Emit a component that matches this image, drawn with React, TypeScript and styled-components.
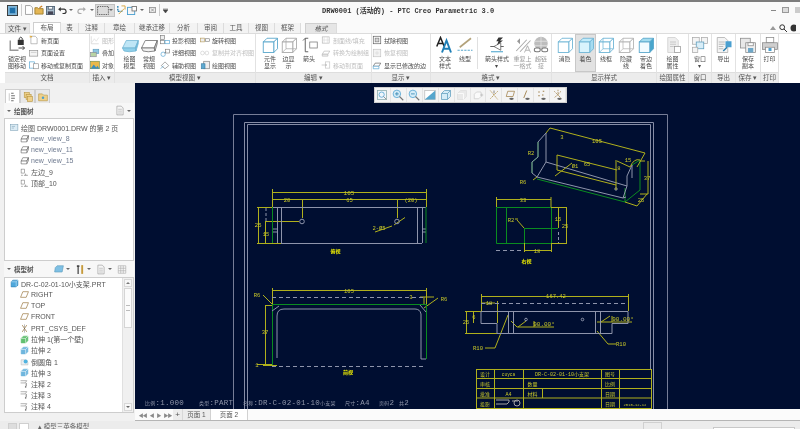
import React from 'react';
import styled, { createGlobalStyle } from 'styled-components';

const Global = createGlobalStyle`
  html, body { margin: 0; padding: 0; background: #f0f0f0; overflow: hidden; }
  * { box-sizing: border-box; }
`;

const SANS = `"Liberation Sans", "Noto Sans CJK SC", sans-serif`;
const MONO = `"Liberation Mono", "Noto Sans CJK SC", monospace`;

const Root = styled.div`
  width: 800px; height: 429px; overflow: hidden; display: flex; flex-direction: column;
  font-family: ${SANS}; color: #444; background: #f0f0f0; filter: blur(0.4px);
`;
const TitleBar = styled.div`
  height: 22px; flex: none; display: flex; align-items: center; background: #fafafa;
  border-top: 2px solid #7d7d7d; padding-bottom: 4px;
`;
const Quick = styled.div`
  width: 172px; flex: none; display: flex; align-items: center; padding-left: 6px; height: 100%;
`;
const QuickSlot = styled.span<{ $w: number; $on?: boolean }>`
  width: ${p => p.$w}px; height: 13px; display: flex; align-items: center; justify-content: center; flex: none;
  background: ${p => (p.$on ? '#dcdcdc' : 'transparent')};
  border: ${p => (p.$on ? '1px solid #c0c0c0' : 'none')};
`;
const Caret = styled.span`
  width: 0; height: 0; border-left: 2px solid transparent; border-right: 2px solid transparent;
  border-top: 2.5px solid #666; display: inline-block; flex: none;
`;
const Title = styled.div`
  flex: 1; font: 7px ${MONO}; color: #333; font-weight: 700; padding-left: 150px; white-space: nowrap;
`;
const WinCtrls = styled.div`
  width: 30px; flex: none; display: flex; align-items: center; gap: 6px; padding-left: 1px;
`;
const TabRow = styled.div`
  height: 11px; flex: none; display: flex; align-items: flex-end; padding-left: 5px; background: #fafafa; position: relative; gap: 0;
`;
const Tab = styled.div<{ $w: number; $active?: boolean; $file?: boolean; $ctx?: boolean }>`
  width: ${p => p.$w}px; height: ${p => (p.$active ? 11 : 10)}px; flex: none; text-align: center;
  font-size: 6.5px; line-height: 10px; white-space: nowrap; color: #555;
  font-style: ${p => (p.$ctx ? 'italic' : 'normal')};
  background: ${p => (p.$active ? '#fff' : p.$file || p.$ctx ? '#e6e6e6' : '#f3f3f3')};
  border: ${p => (p.$active || p.$ctx || p.$file ? '1px solid #cfcfcf' : 'none')};
  border-right: 1px solid #dcdcdc;
  border-bottom: none;
`;
const TabGap = styled.div<{ $w: number }>`
  width: ${p => p.$w}px; flex: none; height: 1px;
`;
const TabEnd = styled.div`
  margin-left: auto; width: 30px; height: 11px; display: flex; align-items: center; gap: 3px;
`;
const Ribbon = styled.div`
  height: 50px; flex: none; display: flex; padding-left: 5px; background: #fff; border-top: 1px solid #dcdcdc;
`;
const Group = styled.div<{ $w: number }>`
  width: ${p => p.$w}px; flex: none; display: flex; flex-direction: column; border-right: 1px solid #e2e2e2;
`;
const GroupBody = styled.div`
  height: 38px; display: flex; flex: none;
`;
const GroupLabel = styled.div`
  height: 12px; flex: none; background: #ececec; border-top: 1px solid #dedede; border-bottom: 1px solid #d5d5d5;
  font-size: 6.5px; line-height: 10px; text-align: center; color: #555; white-space: nowrap;
`;
const Big = styled.div<{ $w: number; $active?: boolean; $off?: boolean }>`
  width: ${p => p.$w}px; flex: none; display: flex; flex-direction: column; align-items: center; padding-top: 2px;
  font-size: 6px; line-height: 7px; text-align: center; color: ${p => (p.$off ? '#9a9a9a' : '#4a4a4a')};
  background: ${p => (p.$active ? '#e2e2e2' : 'transparent')};
  box-shadow: ${p => (p.$active ? 'inset 0 0 0 1px #c8c8c8' : 'none')};
  svg { width: 18px; height: 18px; margin-bottom: 2px; flex: none; }
  span { display: block; white-space: pre; }
`;
const SmallCol = styled.div<{ $w: number }>`
  width: ${p => p.$w}px; flex: none; display: flex; flex-direction: column;
`;
const SmallRow = styled.div<{ $off?: boolean }>`
  height: 12.5px; display: flex; align-items: center; gap: 2px; font-size: 6px; white-space: nowrap;
  color: ${p => (p.$off ? '#a8a8a8' : '#4a4a4a')};
  opacity: ${p => (p.$off ? 0.75 : 1)};
  svg { width: 10px; height: 10px; flex: none; }
`;
const VSep = styled.div`
  width: 1px; flex: none; margin: 3px 2px; background: #e0e0e0;
`;
const Body = styled.div`
  height: 338px; flex: none; display: flex;
`;
const Side = styled.div`
  width: 135px; flex: none; background: #f1f1f1; padding: 6px 1px 0 4px; display: flex; flex-direction: column;
`;
const PanelTabs = styled.div`
  height: 14px; flex: none; display: flex; padding-left: 1px;
`;
const PanelTab = styled.div<{ $active?: boolean }>`
  width: 15px; height: 14px; display: flex; align-items: center; justify-content: center; flex: none;
  background: ${p => (p.$active ? '#fff' : '#e8e8e8')}; border: 1px solid #cfcfcf; border-bottom: none;
  svg { width: 10px; height: 10px; }
`;
const PanelHead = styled.div<{ $h: number }>`
  height: ${p => p.$h}px; flex: none; display: flex; align-items: center; padding: 0 3px; font-size: 6.5px; font-weight: 700; color: #555;
  gap: 3px; background: #f7f7f7; white-space: nowrap;
`;
const Spacer = styled.div<{ $w?: number }>`
  width: ${p => (p.$w ? `${p.$w}px` : 'auto')}; flex: ${p => (p.$w ? 'none' : 1)};
`;
const HeadIcon = styled.span`
  display: flex; align-items: center; gap: 2px; margin-left: 2px; flex: none;
  svg { width: 10px; height: 11px; }
`;
const TreeBox = styled.div<{ $h: number }>`
  height: ${p => p.$h}px; flex: none; background: #fff; border: 1px solid #cdcdcd; display: flex;
`;
const TreeList = styled.div<{ $top: number }>`
  flex: 1; padding-top: ${p => p.$top}px; min-width: 0;
`;
const TreeRow = styled.div<{ $indent: number; $dim?: boolean }>`
  height: 11.15px; display: flex; align-items: center; gap: 2px; padding-left: ${p => p.$indent}px;
  font-size: 7px; white-space: nowrap; color: ${p => (p.$dim ? '#6f7b90' : '#555')};
  svg { width: 9px; height: 9px; flex: none; }
`;
const Scroll = styled.div`
  width: 11px; flex: none; display: flex; flex-direction: column; background: #f0f0f0; border-left: 1px solid #e0e0e0; padding: 1px;
`;
const ScrollBtn = styled.div`
  height: 8px; flex: none; display: flex; align-items: center; justify-content: center; background: #f7f7f7; border: 1px solid #d8d8d8;
`;
const UpCaret = styled(Caret)`
  border-top: none; border-bottom: 2.5px solid #777;
`;
const ScrollThumb = styled.div`
  height: 40px; flex: none; background: #fbfbfb; border: 1px solid #d5d5d5; margin: 1px 0; display: flex; align-items: center; justify-content: center;
  &::after { content: ''; width: 4px; height: 4px; border-top: 1px solid #bbb; border-bottom: 1px solid #bbb; }
`;
const ScrollTrack = styled.div`
  flex: 1;
`;
const Work = styled.div`
  flex: 1; min-width: 0; display: flex; flex-direction: column;
`;
const Canvas = styled.div`
  height: 326px; flex: none; background: #000e31; position: relative; overflow: hidden;
`;
const Sheet = styled.svg`
  display: block; width: 665px; height: 326px;
`;
const FloatBar = styled.div`
  position: absolute; left: 239px; top: 4px; width: 193px; height: 16px; display: flex;
  background: #f4f4f4; border: 1px solid #d0d0d0;
`;
const FloatCell = styled.div`
  flex: 1; display: flex; align-items: center; justify-content: center; border-right: 1px solid #e4e4e4;
  svg { width: 12px; height: 12px; }
`;
const PageStrip = styled.div`
  height: 12px; flex: none; background: #fbfbfb; display: flex; align-items: stretch; padding-left: 2px;
  border-bottom: 1px solid #b5b5b5;
`;
const NavBtns = styled.div`
  width: 36px; flex: none; display: flex; align-items: center; justify-content: space-around; font-size: 5px; color: #8a8a8a; letter-spacing: -1px;
`;
const PageAdd = styled.div`
  width: 10px; flex: none; text-align: center; font-size: 8px; line-height: 11px; color: #555; background: #ececec; border-right: 1px solid #d8d8d8;
`;
const PageTab = styled.div<{ $w: number; $active?: boolean }>`
  width: ${p => p.$w}px; flex: none; text-align: center; font-size: 6.5px; line-height: 11px; color: #555;
  background: ${p => (p.$active ? '#fff' : '#ececec')}; border-right: 1px solid #d2d2d2;
`;
const Status = styled.div`
  height: 8px; flex: none; display: flex; align-items: flex-start; background: #ececec; overflow: hidden; font-size: 6.5px; color: #666; padding-left: 8px;
`;
const StatusBtn = styled.div<{ $w: number; $white?: boolean }>`
  width: ${p => p.$w}px; height: 8px; margin: 2px 2px 0 0; flex: none; background: ${p => (p.$white ? '#fff' : '#ddd')}; border: 1px solid #cfcfcf;
`;
const StatusText = styled.div`
  width: 612px; flex: none; padding: 1px 0 0 7px; line-height: 10px; white-space: nowrap;
`;
const StatusSlot = styled.div<{ $w: number; $white?: boolean }>`
  width: ${p => p.$w}px; height: 8px; margin-top: ${p => (p.$white ? 6 : 1)}px; flex: none;
  background: ${p => (p.$white ? '#fff' : 'transparent')};
  border: 1px solid ${p => (p.$white ? '#c8c8c8' : '#d0d0d0')};
  border-bottom: none;
`;

/* ---------- drawing text ---------- */
const Dim = styled.text<{ $s?: number }>`
  font: ${p => p.$s ?? 5.5}px ${MONO}; fill: #c9c92a; text-anchor: middle;
`;
const Mark = styled.text`
  font: 700 5px "Noto Sans CJK SC", sans-serif; fill: #f0f000; text-anchor: middle;
`;
const SheetInfo = styled.text`
  font: 7.5px ${MONO}; fill: #8f96aa; letter-spacing: 0.25px;
`;
const Cjk = styled.tspan`
  font-size: 5px;
`;

/* ---------- icons ---------- */
const Cube = ({ s = '#7fb6d0', f = '#fff', t = '#fff', r = '#fff', wire = false }: { s?: string; f?: string; t?: string; r?: string; wire?: boolean }) => (
  <svg viewBox="0 0 24 24">
    <path d="M3 8 L8 3 H22 L17 8 Z" fill={t} stroke={s} strokeWidth="1.2" />
    <path d="M17 8 L22 3 V17 L17 22 Z" fill={r} stroke={s} strokeWidth="1.2" />
    <rect x="3" y="8" width="14" height="14" fill={f} stroke={s} strokeWidth="1.2" />
    {wire && <path d="M8 3 V17 H22 M8 17 L3 22" fill="none" stroke={s} strokeWidth="1" />}
  </svg>
);
const Slab = ({ blue }: { blue?: boolean }) => (
  <svg viewBox="0 0 24 24">
    <path d="M2 16 L7 6 H23 L19 16 Z" fill={blue ? '#bfe6f6' : '#fff'} stroke={blue ? '#6fb3d2' : '#666'} strokeWidth="1" />
    <path d="M2 16 H19 L20 20 Q10 22 4 20 Z" fill={blue ? '#8fd0ea' : '#f2f2f2'} stroke={blue ? '#6fb3d2' : '#666'} strokeWidth="1" />
    <path d="M19 16 L23 6 L23 10 L20 20 Z" fill={blue ? '#6fbde0' : '#ddd'} stroke={blue ? '#6fb3d2' : '#666'} strokeWidth="1" />
  </svg>
);
const LockMove = () => (
  <svg viewBox="0 0 24 24">
    <path d="M3 6 V19 H14" fill="none" stroke="#999" strokeWidth="2" />
    <rect x="13" y="5" width="8" height="7" fill="#333" />
    <path d="M15 5 V3 Q17 0 19 3 V5" fill="none" stroke="#333" strokeWidth="1.2" />
    <path d="M14 16 H22 M19.5 13.5 L22 16 L19.5 18.5" fill="none" stroke="#333" strokeWidth="1.2" />
  </svg>
);
const Arrows = () => (
  <svg viewBox="0 0 24 24">
    <path d="M7 3 V21 M7 3 L4 6 M7 3 H11 M7 21 H11" fill="none" stroke="#555" strokeWidth="1.2" />
    <rect x="13" y="8" width="10" height="8" fill="#fff" stroke="#777" />
  </svg>
);
const TextStyle = () => (
  <svg viewBox="0 0 24 24">
    <path d="M1 14 L6 2 L11 14 M3 10 H9" fill="none" stroke="#222" strokeWidth="2" />
    <path d="M8 22 L14 6 L20 22 M10.5 17 H17.5" fill="none" stroke="#1f7fb6" strokeWidth="2.6" />
  </svg>
);
const LineStyle = () => (
  <svg viewBox="0 0 24 24">
    <path d="M5 15 L20 3" stroke="#b3a27a" strokeWidth="2.2" />
    <path d="M2 19 H22" stroke="#58a7cc" strokeWidth="1.6" strokeDasharray="3 1.5" />
  </svg>
);
const ArrowStyle = () => (
  <svg viewBox="0 0 24 24">
    <path d="M3 14 H21" stroke="#555" strokeWidth="1.2" />
    <path d="M8 14 L17 9 V19 Z" fill="#fff" stroke="#555" />
    <path d="M14 2 H20 L16 6 H20 L12 12 L14 7 H11 Z" fill="#333" />
    <path d="M4 21 H20" stroke="#4aa3cd" strokeWidth="1.4" />
  </svg>
);
const Repeat = () => (
  <svg viewBox="0 0 24 24">
    <path d="M3 20 L17 5 M8 21 L22 6" stroke="#aaa" strokeWidth="1.4" />
    <path d="M4 7 L8 3 V11 Z" fill="#999" />
    <path d="M14 22 L18 13 L22 22 M16 19 H20" fill="none" stroke="#999" />
  </svg>
);
const Link = () => (
  <svg viewBox="0 0 24 24">
    <circle cx="12" cy="10" r="9" fill="#bdbdbd" />
    <path d="M4 7 H20 M4 13 H20 M12 1 V19" stroke="#e6e6e6" />
    <rect x="3" y="16" width="8" height="5" rx="2.5" fill="#fff" stroke="#777" strokeWidth="1.4" />
    <rect x="13" y="16" width="8" height="5" rx="2.5" fill="#fff" stroke="#777" strokeWidth="1.4" />
  </svg>
);
const Props = () => (
  <svg viewBox="0 0 24 24">
    <path d="M5 2 H15 L19 6 V22 H5 Z" fill="#eee" stroke="#ccc" />
    <path d="M8 8 H16 M8 11 H16 M8 14 H13" stroke="#bbb" />
    <rect x="14" y="14" width="8" height="8" fill="#fff" stroke="#999" />
  </svg>
);
const WindowIcon = () => (
  <svg viewBox="0 0 24 24">
    <rect x="2" y="2" width="9" height="9" fill="#f4f4f4" stroke="#aaa" />
    <rect x="14" y="2" width="8" height="8" fill="#f4f4f4" stroke="#aaa" />
    <rect x="7" y="8" width="10" height="9" fill="#d9eef8" stroke="#5d9dbd" />
    <rect x="2" y="15" width="7" height="7" fill="#f4f4f4" stroke="#aaa" />
  </svg>
);
const ExportIcon = () => (
  <svg viewBox="0 0 24 24">
    <path d="M3 2 H13 L17 6 V22 H3 Z" fill="#f4f4f4" stroke="#aaa" />
    <path d="M5 8 H13 M5 11 H13 M5 14 H11 M5 17 H11" stroke="#aaa" />
    <rect x="14" y="7" width="8" height="8" fill="#4a9fd0" />
    <path d="M11 20 L16 15" stroke="#2a7fae" strokeWidth="2" />
  </svg>
);
const SaveCopy = () => (
  <svg viewBox="0 0 24 24">
    <rect x="2" y="3" width="13" height="13" fill="#e8e8e8" stroke="#888" />
    <rect x="9" y="9" width="13" height="13" fill="#efefef" stroke="#888" />
    <rect x="12" y="9" width="7" height="4" fill="#fff" stroke="#888" />
    <rect x="12" y="16" width="7" height="6" fill="#6ea7c8" />
  </svg>
);
const PrintIcon = () => (
  <svg viewBox="0 0 24 24">
    <rect x="7" y="2" width="10" height="7" fill="#fff" stroke="#888" />
    <rect x="2" y="9" width="20" height="9" fill="#cfcfcf" stroke="#888" />
    <rect x="6" y="15" width="12" height="7" fill="#fff" stroke="#888" />
    <rect x="10" y="16" width="4" height="4" fill="#4a9fd0" />
  </svg>
);

type Sm = 'page' | 'setup' | 'move' | 'graph' | 'overlay' | 'pic' | 'proj' | 'detail' | 'aux' | 'rot' | 'copy' | 'view' | 'hatch' | 'conv' | 'mv2' | 'erase' | 'rest' | 'edge';
const small: Record<Sm, React.ReactNode> = {
  page: <><path d="M3 2 H10 L13 5 V14 H3 Z" fill="#fff" stroke="#999" /><path d="M2 1 L4 3 M1 3 H5" stroke="#e2a21a" strokeWidth="1.4" /></>,
  setup: <><rect x="1" y="4" width="13" height="9" fill="#f4f4f4" stroke="#888" /><path d="M3 7 H12" stroke="#bbb" /></>,
  move: <><rect x="1" y="3" width="8" height="10" fill="#fff" stroke="#4a9fd0" /><rect x="7" y="6" width="8" height="8" fill="#fff" stroke="#888" /></>,
  graph: <><path d="M2 2 V14 H14" fill="none" stroke="#bbb" /><path d="M3 12 L7 6 L10 10 L14 4" fill="none" stroke="#ccc" /></>,
  overlay: <><rect x="5" y="2" width="9" height="7" fill="#8fc6e2" stroke="#5d9dbd" /><rect x="1" y="7" width="9" height="7" fill="#b9d4a4" stroke="#889" /></>,
  pic: <><rect x="1" y="2" width="14" height="12" fill="#e9b94a" stroke="#6b8f4d" /><path d="M1 14 L6 7 L10 12 L12 9 L15 14 Z" fill="#3b8fbd" /></>,
  proj: <><rect x="1" y="1" width="6" height="6" fill="#eee" stroke="#777" /><rect x="1" y="9" width="6" height="5" fill="#fff" stroke="#777" /><rect x="8" y="9" width="7" height="5" fill="#fff" stroke="#4a9fd0" /></>,
  detail: <><circle cx="5" cy="10" r="3.5" fill="#fff" stroke="#4a9fd0" /><rect x="9" y="2" width="6" height="6" fill="#fff" stroke="#777" /><path d="M7 8 L10 6" stroke="#777" /></>,
  aux: <><path d="M2 9 L8 3 L14 9 L8 14 Z" fill="#fff" stroke="#777" /><path d="M1 14 L6 9" stroke="#4a9fd0" /></>,
  rot: <><rect x="1" y="5" width="6" height="6" fill="#eee" stroke="#b59a5a" /><rect x="9" y="6" width="6" height="4" fill="#fff" stroke="#777" /></>,
  copy: <><circle cx="4" cy="8" r="3" fill="none" stroke="#bbb" /><circle cx="11" cy="8" r="3" fill="none" stroke="#bbb" /><path d="M6 8 H9" stroke="#ccc" /></>,
  view: <><rect x="6" y="2" width="9" height="12" fill="#eee" stroke="#777" /><rect x="2" y="6" width="6" height="8" fill="#5da8d0" stroke="#3c7fa3" /></>,
  hatch: <><rect x="2" y="3" width="11" height="10" fill="none" stroke="#999" /><path d="M2 8 H13 M5 3 V13 M10 3 V13" stroke="#ccc" /></>,
  conv: <><path d="M2 10 L5 5 H14 L11 10 Z" fill="#fff" stroke="#999" /><path d="M2 10 H11 V13 H2 Z" fill="#eee" stroke="#999" /></>,
  mv2: <><rect x="7" y="3" width="7" height="10" fill="#fff" stroke="#aaa" /><path d="M1 8 H9 M7 6 L9 8 L7 10" fill="none" stroke="#999" /></>,
  erase: <><rect x="2" y="2" width="12" height="12" fill="#fff" stroke="#555" /><rect x="5" y="5" width="6" height="6" fill="#d4d4d4" stroke="#777" /></>,
  rest: <><rect x="2" y="2" width="12" height="12" fill="#eee" stroke="#aaa" /><path d="M5 8 H11 M8 5 V11" stroke="#ccc" /></>,
  edge: <><path d="M2 10 L5 5 H14 L11 10 Z" fill="#fff" stroke="#555" /><path d="M2 10 H11 V14 H2 Z" fill="#fff" stroke="#4a9fd0" /></>,
};
const S = ({ n }: { n: Sm }) => <svg viewBox="0 0 16 16">{small[n]}</svg>;

const ViewIcon = () => (
  <svg viewBox="0 0 16 16"><path d="M2 9 L5 3 H15 L12 9 Z" fill="#fff" stroke="#555" /><path d="M2 9 H12 V14 H2 Z" fill="#fff" stroke="#555" /><path d="M12 9 L15 3 V8 L12 14" fill="#ddd" stroke="#555" /></svg>
);
const NoteIcon = () => (
  <svg viewBox="0 0 16 16"><rect x="2" y="2" width="6" height="7" fill="#fff" stroke="#777" /><path d="M2 13 H5 M7 13 H14 M10 10 V13" stroke="#888" strokeWidth="1.3" /></svg>
);
const PlaneIcon = () => (
  <svg viewBox="0 0 16 16"><path d="M1 13 L5 3 H15 L11 13 Z" fill="none" stroke="#a0804a" strokeWidth="1.3" /></svg>
);
const CsysIcon = () => (
  <svg viewBox="0 0 16 16"><path d="M4 2 L12 14 M12 2 L4 14" stroke="#a0804a" strokeWidth="1.4" /><path d="M8 1 V15" stroke="#555" strokeDasharray="2 1" /></svg>
);
const Feat = ({ c }: { c: string }) => (
  <svg viewBox="0 0 16 16"><path d="M2 6 L6 2 H14 V10 L10 14 H2 Z" fill={c} stroke={c} /><path d="M2 6 H10 V14 M10 6 L14 2" fill="none" stroke="#fff" strokeWidth="1" /></svg>
);
const Round = () => (
  <svg viewBox="0 0 16 16"><path d="M2 5 H9 Q14 5 14 10 V14 H2 Z" fill="#e9eef2" stroke="#bbb" /><circle cx="10" cy="8" r="3.5" fill="#4fb3e0" /></svg>
);
const AnnIcon = () => (
  <svg viewBox="0 0 16 16"><path d="M1 3 H12 L9 7 H1" fill="#fff" stroke="#777" /><path d="M11 7 V13" stroke="#444" strokeWidth="1.2" /><circle cx="10" cy="14" r="1.3" fill="#444" /></svg>
);
const RootPart = () => (
  <svg viewBox="0 0 16 16"><path d="M2 5 L5 2 H14 V11 L11 14 H2 Z" fill="#4fa8dc" stroke="#2d7fb0" /><path d="M2 5 H11 V14 M11 5 L14 2" fill="none" stroke="#cdeafa" /></svg>
);
const SheetIcon = () => (
  <svg viewBox="0 0 16 16"><rect x="1" y="3" width="13" height="10" fill="#dcecf5" stroke="#7b9fb5" /><path d="M3 6 H9 M3 9 H7" stroke="#7b9fb5" /></svg>
);
const DocIcon = () => (
  <svg viewBox="0 0 16 16"><path d="M3 1 H10 L13 4 V15 H3 Z" fill="#f6f6f6" stroke="#999" /><path d="M5 6 H11 M5 9 H11 M5 12 H11" stroke="#aaa" /></svg>
);
const TreeTabIcon = () => (
  <svg viewBox="0 0 16 16"><path d="M5 2 H9 M5 6 H11 M5 10 H11 M5 14 H9" stroke="#666" strokeWidth="1.5" /><path d="M2 2 V14" stroke="#aaa" /></svg>
);
const FolderTabIcon = () => (
  <svg viewBox="0 0 16 16"><rect x="2" y="1" width="8" height="8" fill="#eed08a" stroke="#b99740" /><rect x="5" y="4" width="8" height="8" fill="#eed08a" stroke="#b99740" /><rect x="7" y="7" width="8" height="8" fill="#eed08a" stroke="#b99740" /></svg>
);
const FavTabIcon = () => (
  <svg viewBox="0 0 16 16"><path d="M1 3 H7 L9 5 H15 V14 H1 Z" fill="#eed08a" stroke="#b99740" /><circle cx="8" cy="9" r="2" fill="#4a9fd0" /></svg>
);

/* ---------- data ---------- */
const tabs = [
  { t: '布局', w: 28, active: true },
  { t: '表', w: 18 }, { t: '注释', w: 26 }, { t: '章绘', w: 30 }, { t: '继承迁移', w: 35 },
  { t: '分析', w: 28 }, { t: '审阅', w: 26 }, { t: '工具', w: 25 }, { t: '视图', w: 26 }, { t: '框架', w: 26 },
];

const floatIcons: React.ReactNode[] = [
  <><rect x="2" y="2" width="12" height="12" fill="#eef6fb" stroke="#8aa" /><circle cx="7.5" cy="7.5" r="3.5" fill="none" stroke="#4a9fd0" /><path d="M10 10 L14 14" stroke="#777" /></>,
  <><circle cx="6.5" cy="6.5" r="5" fill="#d5ecf7" stroke="#4a9fd0" /><path d="M4 6.5 H9 M6.5 4 V9" stroke="#2a7fae" /><path d="M10 10 L15 15" stroke="#777" strokeWidth="1.5" /></>,
  <><circle cx="6.5" cy="6.5" r="5" fill="#d5ecf7" stroke="#4a9fd0" /><path d="M4 6.5 H9" stroke="#2a7fae" /><path d="M10 10 L15 15" stroke="#777" strokeWidth="1.5" /></>,
  <><rect x="1" y="2" width="14" height="12" fill="#fff" stroke="#bbb" /><path d="M1 14 L15 2 V14 Z" fill="#55a5cc" /></>,
  <><path d="M2 6 L6 2 H14 V10 L10 14 H2 Z" fill="#d5ecf7" stroke="#5d9dbd" /><path d="M2 6 H10 V14 M10 6 L14 2" fill="none" stroke="#5d9dbd" /></>,
  <><path d="M2 6 L6 2 H14 V10 L10 14 H2 Z" fill="#e9e9e9" stroke="#ddd" /><path d="M2 6 H10 V14" fill="none" stroke="#fff" /></>,
  <><path d="M3 7 L6 4 H12 V10 L9 13 H3 Z" fill="#fafafa" stroke="#ccc" /><path d="M11 8 H15 M13 6 V10" stroke="#bbb" /></>,
  <><path d="M3 2 L13 14 M13 3 L3 13" stroke="#b59a5a" strokeWidth="1.2" strokeDasharray="2 1" /><path d="M8 2 V6" stroke="#666" /></>,
  <><path d="M3 10 L5 3 H14 L12 10 Z" fill="none" stroke="#a0804a" /><ellipse cx="10" cy="13" rx="3" ry="1.5" fill="#666" /></>,
  <><path d="M5 12 L9 2" stroke="#a0804a" strokeWidth="1.2" /><ellipse cx="10" cy="13" rx="3" ry="1.5" fill="#666" /></>,
  <><path d="M3 4 H5 M9 3 H11 M3 9 H5 M8 8 H10" stroke="#a0804a" strokeWidth="1.5" /><ellipse cx="10" cy="13" rx="3" ry="1.5" fill="#666" /></>,
  <><path d="M3 3 L12 12 M12 3 L3 12 M8 1 V10" stroke="#a0804a" strokeDasharray="2 1" /><ellipse cx="10" cy="13" rx="3" ry="1.5" fill="#666" /></>,
];

const Y = '#b0b01c';
const G = '#8e94ab';
const N = '#0a8c20';

const rows = [369, 378.5, 388.5, 398, 408];

function Drawing() {
  return (
    <Sheet viewBox="135 83 665 326">
      <g fill="none" strokeWidth="1">
        {/* sheet frames */}
        <path d="M233.5 409 V114.5 H667.5 V409" stroke="#767d97" />
        <path d="M244.5 409 V122.5 H653.5 V409" stroke="#868da6" />
        <path d="M247.5 409 V124.5 H650.5 V369" stroke="#868da6" />

        {/* top view */}
        <g stroke={Y}>
          <path d="M272.5 189 V207 M426.5 189 V207 M272 192.5 H426" />
          <path d="M272 199.5 H426 M302.5 199 V218 M397.5 199 V218" />
          <path d="M257 207.5 H281 M257 243.5 H281 M258.5 207 V243" />
          <path d="M265 221.5 H299 M265.5 221 V243 M394 225 L405 217.5 M375 232 L392 226" />
        </g>
        <g stroke={G}>
          <path d="M272 207.5 H426 M281 243.5 H422" />
          <path d="M277.5 207 V243 M281.5 207 V243 M417.5 207 V243 M422.5 207 V243" />
          <path d="M266 208 V222" strokeDasharray="3 2" />
          <path d="M272 229 H277 M272 232 H277 M422 229 H426 M422 232 H426" />
          <circle cx="302" cy="221.5" r="2.3" />
          <circle cx="397" cy="221.5" r="2.3" />
        </g>
        <path d="M272.5 207 V243 M426 207 V243" stroke={N} />

        {/* front view */}
        <g stroke={Y}>
          <path d="M272.5 288 V305 M426.5 288 V305 M272 290.5 H426 M420 297 H434" />
          <path d="M265 305.5 H273 M265.5 305 V365 M263 365.5 H277 M257 364.5 H272" />
          <path d="M263 295 L273 305 M438 298 L424 308 M424 297 V305" />
        </g>
        <path d="M272 297.5 H426 M272 366.5 H426" stroke={G} strokeDasharray="4 3" />
        <path d="M272.5 365 V304.5 H426.5 V359" stroke={N} />
        <path d="M277 358 V316 Q277 309 284 309 H415 Q420 309 421 314 V359 H426" stroke={G} />
        <path d="M272 311 L279 306 M420 305 L426 312" stroke={G} />

        {/* side view */}
        <path d="M496.5 207.5 H551.5 V243.5 H496.5 Z M506.5 207 V243 M524.5 228.5 H558 M524.5 228 V243" stroke={N} />
        <g stroke={Y}>
          <path d="M496.5 197 V207 M551 197 V207 M496 199.5 H551 M551 207.5 H567 M551 243.5 H567 M566.5 207 V243 M558.5 207 V228" />
          <path d="M524.5 243 V252 M551.5 243 V252 M524 250.5 H551 M517 220 L524 228 M515 219 H518" />
        </g>
        <path d="M496 250.5 H522" stroke={G} strokeDasharray="4 3" />
        <path d="M558.5 232 V243" stroke={G} strokeDasharray="3 2" />

        {/* isometric */}
        <g stroke={N}>
          <path d="M537 179 L625 202 L640 190 V160 L632 165" />
          <path d="M532 173 V162 L538 157 V142" />
          <path d="M625 202 V188" />
        </g>
        <g stroke={G}>
          <path d="M546 133 V162 L627 186 M538 142 L546 133 M538 142 V157 L532 162 V173 L537 177 L623 198 L627 186 V176 L632 165 V178" />
          <path d="M537 177 L546 162 M623 198 L626 197" />
          <circle cx="616" cy="189" r="1.2" />
        </g>
        <g stroke={Y}>
          <path d="M550 128 L645 153 L637 167 M550 128 L546 133 M537 177 L533 180" />
          <path d="M557 155 V170 L616 185 M557 155 L617 170 M616 160 V190" />
          <path d="M555 176 L572 163 M645 161 H640 M648 161 V194 M640 194 H648 M625 202 L637 206 L647 194" />
          <path d="M617 161 L630 167 Q634 158 640 160" />
        </g>

        {/* bottom right view */}
        <g stroke={Y}>
          <path d="M481.5 294 V311 M628.5 294 V311 M481 296.5 H628" />
          <path d="M497.5 301 V323 M481 303 H495" />
          <path d="M465 311.5 H481 M465 333.5 H497 M466.5 311 V333 M473.5 311 V323" />
          <path d="M508 315 L495 348 H485" />
          <path d="M511 321 L517 327 H554 M534 327 V321 M518 327 L526 321" />
          <path d="M597 331 L608 344 H616" />
          <path d="M597 322 H632 M601 322 L610 316 M612 322 V316" />
        </g>
        <path d="M481 303.5 H628" stroke={G} strokeDasharray="4 3" />
        <g stroke={G}>
          <path d="M481 311.5 H628 V323.5 H612 V333.5 H497 V323.5 H481 Z" />
          <path d="M508.5 311 V333 M513.5 311 V333 M595.5 311 V333 M600.5 311 V333" />
          <circle cx="526" cy="319.5" r="1.3" />
          <circle cx="582.5" cy="319.5" r="1.3" />
        </g>

        {/* title block */}
        <g stroke={Y}>
          <rect x="476.5" y="369.5" width="175" height="39" />
          {rows.slice(1, -1).map(r => <path key={r} d={`M476 ${r} H651`} />)}
          <path d="M494.5 369 V408 M523.5 369 V408 M601.5 369 V408 M619.5 369 V408 M542.5 388 V398" />
          <path d="M496 404 H507 L509 402 V400 H496 M512 401 H518" stroke="#a5a5a5" />
          <circle cx="517" cy="403" r="3" stroke="#a5a5a5" />
        </g>
      </g>

      <Dim x="349" y="194.5" $s={6}>105</Dim>
      <Dim x="287" y="201.5">20</Dim>
      <Dim x="349.5" y="201.5">65</Dim>
      <Dim x="411" y="201.5">(20)</Dim>
      <Dim x="258" y="227" $s={6}>25</Dim>
      <Dim x="266" y="235.5">15</Dim>
      <Dim x="379" y="229.5">2-Ø5</Dim>
      <Mark x="335.5" y="252.5">俯视</Mark>

      <Dim x="349" y="292.5">105</Dim>
      <Dim x="411" y="299">3</Dim>
      <Dim x="265" y="333.5">37</Dim>
      <Dim x="257" y="366.5">1</Dim>
      <Dim x="257" y="296.5">R6</Dim>
      <Dim x="444" y="300.5">R6</Dim>
      <Mark x="348" y="373.5">前视</Mark>

      <Dim x="597" y="143">105</Dim>
      <Dim x="587" y="165.5">65</Dim>
      <Dim x="562" y="138.5">3</Dim>
      <Dim x="531" y="154.5">R2</Dim>
      <Dim x="523" y="183.5">R6</Dim>
      <Dim x="575" y="167.5">Ø1</Dim>
      <Dim x="619" y="169.5">8</Dim>
      <Dim x="628" y="161.5">15</Dim>
      <Dim x="647" y="179.5">37</Dim>
      <Dim x="641" y="201.5">25</Dim>
      <Dim x="523" y="201.5">33</Dim>
      <Dim x="511" y="222">R2</Dim>
      <Dim x="558" y="220.5">15</Dim>
      <Dim x="565" y="227.5">25</Dim>
      <Dim x="537" y="252.5">18</Dim>
      <Mark x="526.5" y="262.5">右视</Mark>

      <Dim x="556" y="298">167.42</Dim>
      <Dim x="489" y="305">18</Dim>
      <Dim x="474" y="318.5">6</Dim>
      <Dim x="466" y="323.5">25</Dim>
      <Dim x="544" y="326" $s={6}>90.00°</Dim>
      <Dim x="623" y="321" $s={6}>90.00°</Dim>
      <Dim x="478" y="350">R10</Dim>
      <Dim x="621" y="346">R10</Dim>

      <Dim x="485" y="376" $s={5}>设计</Dim>
      <Dim x="508.5" y="376" $s={4.5}>cuyca</Dim>
      <Dim x="562" y="376" $s={5}>DR-C-02-01-10小支架</Dim>
      <Dim x="610" y="376" $s={5}>图号</Dim>
      <Dim x="485" y="386" $s={5}>审核</Dim>
      <Dim x="532.5" y="386" $s={5}>数量</Dim>
      <Dim x="610" y="386" $s={5}>比例</Dim>
      <Dim x="485" y="395.5" $s={5}>批准</Dim>
      <Dim x="508.5" y="395.5" $s={5}>A4</Dim>
      <Dim x="532.5" y="395.5" $s={5}>材料</Dim>
      <Dim x="610" y="395.5" $s={5}>日期</Dim>
      <Dim x="485" y="405.5" $s={5}>投影</Dim>
      <Dim x="610" y="405.5" $s={5}>日期</Dim>
      <Dim x="635" y="405.5" $s={3.8}>2015-12-12</Dim>

      <SheetInfo x="145" y="405"><Cjk>比例</Cjk>:1.000</SheetInfo>
      <SheetInfo x="199" y="405"><Cjk>类型</Cjk>:PART</SheetInfo>
      <SheetInfo x="243" y="405"><Cjk>名称</Cjk>:DR-C-02-01-10<Cjk>小支架</Cjk></SheetInfo>
      <SheetInfo x="345" y="405"><Cjk>尺寸</Cjk>:A4</SheetInfo>
      <SheetInfo x="379" y="405"><Cjk>页码</Cjk>2</SheetInfo>
      <SheetInfo x="399" y="405"><Cjk>共</Cjk>2</SheetInfo>
    </Sheet>
  );
}

export default function App() {
  return (
    <Root>
      <Global />
      <TitleBar>
        <Quick>
          <QuickSlot $w={13}><svg width="11" height="11" viewBox="0 0 12 12"><rect x=".5" y=".5" width="11" height="11" fill="#7fb5d8" stroke="#333" /><rect x="3" y="3" width="6" height="6" fill="#1f6fa8" /></svg></QuickSlot>
          <QuickSlot $w={5}><svg width="1" height="12"><rect width="1" height="12" fill="#ccc" /></svg></QuickSlot>
          <QuickSlot $w={9}><svg width="8" height="10" viewBox="0 0 9 11"><path d="M.5.5 H6 L8.5 3 V10.5 H.5 Z" fill="#fff" stroke="#999" /></svg></QuickSlot>
          <QuickSlot $w={11}><svg width="10" height="10" viewBox="0 0 11 11"><path d="M1 3 H4 L5 4 H10 V10 H1 Z" fill="#e4b654" stroke="#a07e2c" /><path d="M6 3 L9 1" stroke="#d08020" strokeWidth="1.4" /></svg></QuickSlot>
          <QuickSlot $w={12}><svg width="9" height="9" viewBox="0 0 10 10"><rect x=".5" y=".5" width="9" height="9" fill="#a8bccb" stroke="#567" /><rect x="2.5" y=".5" width="5" height="3" fill="#fff" stroke="#567" /><rect x="2" y="6" width="6" height="3.5" fill="#445" /></svg></QuickSlot>
          <QuickSlot $w={12}><svg width="9" height="7" viewBox="0 0 10 8"><path d="M2 2.5 H7 Q9.5 3 9 6 Q8 8 5 7.5" fill="none" stroke="#333" strokeWidth="1.4" /><path d="M3 0 V5 L0 2.5 Z" fill="#333" /></svg></QuickSlot>
          <QuickSlot $w={6}><Caret /></QuickSlot>
          <QuickSlot $w={14}><svg width="9" height="7" viewBox="0 0 10 8"><path d="M8 2.5 H3 Q.5 3 1 6 Q2 8 5 7.5" fill="none" stroke="#aaa" strokeWidth="1.4" /><path d="M7 0 V5 L10 2.5 Z" fill="#aaa" /></svg></QuickSlot>
          <QuickSlot $w={7}><Caret /></QuickSlot>
          <QuickSlot $w={20} $on><svg width="12" height="9" viewBox="0 0 13 10"><rect x=".5" y=".5" width="12" height="9" fill="none" stroke="#555" strokeDasharray="1.5 1" /></svg><Caret /></QuickSlot>
          <QuickSlot $w={11}><svg width="10" height="10" viewBox="0 0 11 11"><path d="M2 1 V7 H8" fill="none" stroke="#2a7fae" strokeWidth="1.5" strokeDasharray="2 1" /><path d="M6 1 L10 1 L10 5 M3 10 L9 4" stroke="#d3a23a" fill="none" /></svg></QuickSlot>
          <QuickSlot $w={12}><svg width="10" height="9" viewBox="0 0 11 10"><rect x=".5" y="1.5" width="8" height="8" fill="#f6f6f6" stroke="#4a9fd0" /><rect x="5.5" y=".5" width="5" height="5" fill="#fff" stroke="#777" /></svg></QuickSlot>
          <QuickSlot $w={8}><Caret /></QuickSlot>
          <QuickSlot $w={12}><svg width="7" height="6" viewBox="0 0 9 8"><rect x=".5" y=".5" width="8" height="7" fill="#eee" stroke="#888" /><path d="M2.5 2 L6.5 6 M6.5 2 L2.5 6" stroke="#888" /></svg></QuickSlot>
          <QuickSlot $w={3}><svg width="1" height="12"><rect width="1" height="12" fill="#ccc" /></svg></QuickSlot>
          <QuickSlot $w={9}><svg width="5" height="5" viewBox="0 0 6 6"><path d="M0 0 H6 M0 2 H6 L3 6 Z" fill="#444" stroke="#444" strokeWidth=".6" /></svg></QuickSlot>
        </Quick>
        <Title>DRW0001 (活动的) - PTC Creo Parametric 3.0</Title>
        <WinCtrls>
          <svg width="6" height="2"><rect width="6" height="1" y="1" fill="#888" /></svg>
          <svg width="7" height="6"><rect x=".5" y=".5" width="6" height="5" fill="#ddd" stroke="#999" /></svg>
          <svg width="6" height="6"><rect width="6" height="6" fill="#ccc" /></svg>
        </WinCtrls>
      </TitleBar>
      <TabRow>
        <Tab $w={25} $file>文件 ▾</Tab>
        <TabGap $w={3} />
        {tabs.map(t => <Tab key={t.t} $w={t.w} $active={t.active}>{t.t}</Tab>)}
        <TabGap $w={4} />
        <Tab $w={32} $ctx>格式</Tab>
        <TabEnd>
          <svg width="6" height="4" viewBox="0 0 6 4"><path d="M0 4 L3 0 L6 4 Z" fill="#999" /></svg>
          <svg width="8" height="8" viewBox="0 0 8 8"><circle cx="3.2" cy="3.2" r="2.4" fill="none" stroke="#333" /><path d="M5 5 L8 8" stroke="#333" /></svg>
          <svg width="6" height="8" viewBox="0 0 6 8"><circle cx="4" cy="4" r="3.5" fill="#333" /></svg>
        </TabEnd>
      </TabRow>
      <Ribbon>
        <Group $w={85}>
          <GroupBody>
            <Big $w={24}><LockMove /><span>{'锁定视\n图移动'}</span></Big>
            <SmallCol $w={60}>
              <SmallRow><S n="page" />新页面</SmallRow>
              <SmallRow><S n="setup" />页面设置</SmallRow>
              <SmallRow><S n="move" />移动或复制页面</SmallRow>
            </SmallCol>
          </GroupBody>
          <GroupLabel>文档</GroupLabel>
        </Group>
        <Group $w={25}>
          <GroupBody>
            <SmallCol $w={24}>
              <SmallRow $off><S n="graph" />图形</SmallRow>
              <SmallRow><S n="overlay" />叠加</SmallRow>
              <SmallRow><S n="pic" />对象</SmallRow>
            </SmallCol>
          </GroupBody>
          <GroupLabel>插入 ▾</GroupLabel>
        </Group>
        <Group $w={141}>
          <GroupBody>
            <Spacer $w={5} />
            <Big $w={19}><Slab blue /><span>{'绘图\n模型'}</span></Big>
            <Big $w={20}><Slab /><span>{'常规\n视图'}</span></Big>
            <Spacer $w={1} />
            <SmallCol $w={40}>
              <SmallRow><S n="proj" />投影视图</SmallRow>
              <SmallRow><S n="detail" />详细视图</SmallRow>
              <SmallRow><S n="aux" />辅助视图</SmallRow>
            </SmallCol>
            <SmallCol $w={55}>
              <SmallRow><S n="rot" />旋转视图</SmallRow>
              <SmallRow $off><S n="copy" />复制并对齐视图</SmallRow>
              <SmallRow><S n="view" />绘图视图</SmallRow>
            </SmallCol>
          </GroupBody>
          <GroupLabel>模型视图 ▾</GroupLabel>
        </Group>
        <Group $w={116}>
          <GroupBody>
            <Spacer $w={4} />
            <Big $w={20}><Cube s="#5aa7cc" /><span>{'元件\n显示'}</span></Big>
            <Big $w={17}><Cube s="#aaa" wire /><span>{'边显\n示'}</span></Big>
            <Big $w={24}><Arrows /><span>箭头</span></Big>
            <SmallCol $w={50}>
              <SmallRow $off><S n="hatch" />剖面线/填充</SmallRow>
              <SmallRow $off><S n="conv" />转换为绘制组</SmallRow>
              <SmallRow $off><S n="mv2" />移动到页面</SmallRow>
            </SmallCol>
          </GroupBody>
          <GroupLabel>编辑 ▾</GroupLabel>
        </Group>
        <Group $w={59}>
          <GroupBody>
            <SmallCol $w={58}>
              <SmallRow><S n="erase" />拭除视图</SmallRow>
              <SmallRow $off><S n="rest" />恢复视图</SmallRow>
              <SmallRow><S n="edge" />显示已修改的边</SmallRow>
            </SmallCol>
          </GroupBody>
          <GroupLabel>显示 ▾</GroupLabel>
        </Group>
        <Group $w={121}>
          <GroupBody>
            <Spacer $w={4} />
            <Big $w={20}><TextStyle /><span>{'文本\n样式'}</span></Big>
            <Big $w={20}><LineStyle /><span>线型</span></Big>
            <VSep />
            <Big $w={34}><ArrowStyle /><span>{'箭头样式\n▾'}</span></Big>
            <Big $w={17} $off><Repeat /><span>{'重复上\n一格式'}</span></Big>
            <Big $w={20} $off><Link /><span>{'超链\n接'}</span></Big>
          </GroupBody>
          <GroupLabel>格式 ▾</GroupLabel>
        </Group>
        <Group $w={105}>
          <GroupBody>
            <Spacer $w={2} />
            <Big $w={21}><Cube s="#6fb6d6" /><span>消隐</span></Big>
            <Big $w={21} $active><Cube s="#6fb6d6" f="#d9f4fd" t="#c3ecfa" r="#a5dcf1" /><span>着色</span></Big>
            <Big $w={20}><Cube s="#6fb6d6" wire /><span>线框</span></Big>
            <Big $w={20}><Cube s="#b4b4b4" wire /><span>{'隐藏\n线'}</span></Big>
            <Big $w={20}><Cube s="#5aa7cc" f="#f2fbff" t="#a3dcef" r="#49a6cc" /><span>{'带边\n着色'}</span></Big>
          </GroupBody>
          <GroupLabel>显示样式</GroupLabel>
        </Group>
        <Group $w={32}>
          <GroupBody>
            <Big $w={31}><Props /><span>{'绘图\n属性'}</span></Big>
          </GroupBody>
          <GroupLabel>绘图属性</GroupLabel>
        </Group>
        <Group $w={23}>
          <GroupBody>
            <Big $w={22}><WindowIcon /><span>{'窗口\n▾'}</span></Big>
          </GroupBody>
          <GroupLabel>窗口</GroupLabel>
        </Group>
        <Group $w={24}>
          <GroupBody>
            <Big $w={23}><ExportIcon /><span>导出</span></Big>
          </GroupBody>
          <GroupLabel>导出</GroupLabel>
        </Group>
        <Group $w={25}>
          <GroupBody>
            <Big $w={24}><SaveCopy /><span>{'保存\n副本'}</span></Big>
          </GroupBody>
          <GroupLabel>保存 ▾</GroupLabel>
        </Group>
        <Group $w={18}>
          <GroupBody>
            <Big $w={17}><PrintIcon /><span>打印</span></Big>
          </GroupBody>
          <GroupLabel>打印</GroupLabel>
        </Group>
      </Ribbon>
      <Body>
        <Side>
          <PanelTabs>
            <PanelTab $active><TreeTabIcon /></PanelTab>
            <PanelTab><FolderTabIcon /></PanelTab>
            <PanelTab><FavTabIcon /></PanelTab>
          </PanelTabs>
          <PanelHead $h={15}>
            <Caret />绘图树<Spacer />
            <HeadIcon><DocIcon /><Caret /></HeadIcon>
          </PanelHead>
          <TreeBox $h={143}>
            <TreeList $top={3}>
              <TreeRow $indent={5}><SheetIcon /><span>绘图 DRW0001.DRW 的第 2 页</span></TreeRow>
              <TreeRow $indent={15} $dim><ViewIcon />new_view_8</TreeRow>
              <TreeRow $indent={15} $dim><ViewIcon />new_view_11</TreeRow>
              <TreeRow $indent={15} $dim><ViewIcon />new_view_15</TreeRow>
              <TreeRow $indent={15}><NoteIcon />左边_9</TreeRow>
              <TreeRow $indent={15}><NoteIcon />顶部_10</TreeRow>
            </TreeList>
          </TreeBox>
          <PanelHead $h={16}>
            <Caret />模型树<Spacer $w={12} />
            <HeadIcon><svg viewBox="0 0 16 16"><path d="M2 5 L5 2 H15 L13 12 H1 Z" fill="#7fc0e4" stroke="#5d9dbd" /></svg><Caret /></HeadIcon>
            <HeadIcon><svg viewBox="0 0 16 16"><path d="M3 1 H7 V4 H6 V15 H4 V4 H3 Z" fill="#444" /><path d="M10 1 H13 V15 H10 Z" fill="#c69a3a" /></svg><Caret /></HeadIcon>
            <HeadIcon><DocIcon /><Caret /></HeadIcon>
            <HeadIcon><svg viewBox="0 0 16 16"><path d="M2 2 H14 V14 H2 Z M2 6 H14 M2 10 H14 M6 2 V14 M10 2 V14" fill="none" stroke="#aaa" /></svg></HeadIcon>
          </PanelHead>
          <TreeBox $h={136}>
            <TreeList $top={0}>
              <TreeRow $indent={5}><RootPart /><span>DR-C-02-01-10小支架.PRT</span></TreeRow>
              <TreeRow $indent={15}><PlaneIcon />RIGHT</TreeRow>
              <TreeRow $indent={15}><PlaneIcon />TOP</TreeRow>
              <TreeRow $indent={15}><PlaneIcon />FRONT</TreeRow>
              <TreeRow $indent={15}><CsysIcon />PRT_CSYS_DEF</TreeRow>
              <TreeRow $indent={15}><Feat c="#62c070" />拉伸 1(第一个壁)</TreeRow>
              <TreeRow $indent={15}><Feat c="#6fb6de" />拉伸 2</TreeRow>
              <TreeRow $indent={15}><Round />倒圆角 1</TreeRow>
              <TreeRow $indent={15}><Feat c="#6fb6de" />拉伸 3</TreeRow>
              <TreeRow $indent={15}><AnnIcon />注释 2</TreeRow>
              <TreeRow $indent={15}><AnnIcon />注释 3</TreeRow>
              <TreeRow $indent={15}><AnnIcon />注释 4</TreeRow>
            </TreeList>
            <Scroll>
              <ScrollBtn><UpCaret /></ScrollBtn>
              <ScrollThumb />
              <ScrollTrack />
              <ScrollBtn><Caret /></ScrollBtn>
            </Scroll>
          </TreeBox>
        </Side>
        <Work>
          <Canvas>
            <Drawing />
            <FloatBar>
              {floatIcons.map((ic, i) => <FloatCell key={i}><svg viewBox="0 0 16 16">{ic}</svg></FloatCell>)}
            </FloatBar>
          </Canvas>
          <PageStrip>
            <NavBtns><span>◀◀</span><span>◀</span><span>▶</span><span>▶▶</span></NavBtns>
            <PageAdd>+</PageAdd>
            <PageTab $w={28}>页面 1</PageTab>
            <PageTab $w={37} $active>页面 2</PageTab>
          </PageStrip>
        </Work>
      </Body>
      <Status>
        <StatusBtn $w={9} />
        <StatusBtn $w={10} $white />
        <StatusText>▴ 模型三英条模型</StatusText>
        <StatusSlot $w={19} />
        <Spacer $w={51} />
        <StatusSlot $w={82} $white />
      </Status>
    </Root>
  );
}
